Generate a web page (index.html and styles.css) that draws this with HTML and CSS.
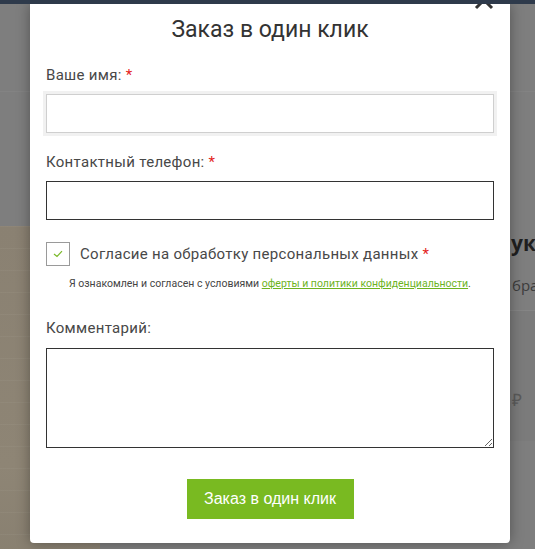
FILE: index.html
```html
<!DOCTYPE html>
<html lang="ru">
<head>
<meta charset="utf-8">
<title>Заказ в один клик</title>
<link rel="stylesheet" href="styles.css">
</head>
<body>
<div class="backdrop">
  <div class="bg-line-top"></div>
  <div class="bg-band"></div>
  <div class="chair"></div>
  <div class="bg-title">ук</div>
  <div class="bg-sub">бра</div>
  <div class="bg-price">₽</div>
</div>
<div class="topbar"></div>
<div class="modal">
  <button class="close" type="button" aria-label="Закрыть">
    <svg width="20" height="20" viewBox="0 0 20 20"><path d="M2 2 L18 18 M18 2 L2 18" stroke="#333" stroke-width="3" fill="none"/></svg>
  </button>
  <h1 class="title">Заказ в один клик</h1>
  <form class="form">
    <label class="label">Ваше имя: <span class="req">*</span></label>
    <input class="field field-focus" type="text">
    <label class="label">Контактный телефон: <span class="req">*</span></label>
    <input class="field" type="text">
    <div class="agree">
      <span class="check">
        <svg width="10" height="8" viewBox="0 0 10 8"><path d="M1 4 L4 6.5 L9 1.2" stroke="#7ab929" stroke-width="1.2" fill="none"/></svg>
      </span>
      <span class="agree-text">Согласие на обработку персональных данных <span class="req">*</span></span>
    </div>
    <p class="note">Я ознакомлен и согласен с условиями <a href="#">оферты и политики конфиденциальности</a>.</p>
    <label class="label label-comment">Комментарий:</label>
    <textarea class="area"></textarea>
    <div class="actions">
      <button class="submit" type="button">Заказ в один клик</button>
    </div>
  </form>
</div>
</body>
</html>
```
FILE: styles.css
```css
html, body {
  margin: 0;
  padding: 0;
}
body {
  width: 535px;
  height: 549px;
  overflow: hidden;
  background: #7e7e7e;
  font-family: Roboto, "Noto Sans", sans-serif;
  position: relative;
}
.backdrop {
  position: absolute;
  inset: 0;
  overflow: hidden;
}
.bg-line-top {
  position: absolute;
  left: 0;
  right: 0;
  top: 91px;
  height: 1px;
  background: #838383;
}
.bg-band {
  position: absolute;
  left: 0;
  right: 0;
  top: 310px;
  height: 130px;
  background: #7b7b7b;
  border-top: 1px solid #858585;
}
.chair {
  position: absolute;
  left: -40px;
  top: 226px;
  width: 140px;
  height: 400px;
  border-radius: 40px 40px 0 0;
  background:
    repeating-linear-gradient(180deg, rgba(255,255,255,0.04) 0 1px, transparent 1px 22px),
    linear-gradient(180deg, #8a8172, #8e8575 60%, #847c6d);
}
.bg-title {
  position: absolute;
  left: 511px;
  top: 229px;
  font-family: "Open Sans", sans-serif;
  font-weight: 700;
  font-size: 21px;
  line-height: 28px;
  color: #1f1f1f;
}
.bg-sub {
  position: absolute;
  left: 512px;
  top: 275px;
  font-family: "Open Sans", sans-serif;
  font-size: 15px;
  line-height: 20px;
  color: #3c3c3c;
}
.bg-price {
  position: absolute;
  left: 512px;
  top: 389px;
  font-family: "Open Sans", sans-serif;
  font-size: 17px;
  line-height: 22px;
  color: #5a5a5a;
}
.topbar {
  position: absolute;
  left: 0;
  top: 0;
  width: 100%;
  height: 4px;
  background: #2e3a4b;
  z-index: 3;
}
.modal {
  position: relative;
  z-index: 2;
  box-sizing: border-box;
  margin: 4px 0 0 30px;
  width: 480px;
  height: 539px;
  background: #fff;
  border-radius: 0 0 4px 4px;
  box-shadow: 0 0 14px rgba(0,0,0,0.35);
  padding: 12px 16px 0;
}
.close {
  position: absolute;
  right: 16px;
  top: -14px;
  width: 20px;
  height: 20px;
  padding: 0;
  border: 0;
  background: none;
}
.close svg {
  display: block;
}
.title {
  margin: 0;
  font-size: 23px;
  line-height: 28px;
  font-weight: 400;
  color: #333;
  text-align: center;
}
.form {
  display: flex;
  flex-direction: column;
  margin-top: 21px;
}
.label {
  display: block;
  font-size: 15px;
  line-height: 20px;
  letter-spacing: 0.3px;
  color: #484848;
  margin-bottom: 9px;
}
.req {
  color: #e41d1d;
}
.field {
  box-sizing: border-box;
  display: block;
  width: 448px;
  height: 39px;
  margin: 0 0 18px;
  border: 1px solid #333;
  border-radius: 0;
  background: #fff;
  padding: 0 10px;
  font: inherit;
  outline: none;
}
.field-focus {
  border-color: #cfcfcf;
  box-shadow: 0 0 0 3px #f1f1f1;
  margin-bottom: 19px;
}
.agree {
  display: flex;
  align-items: center;
  gap: 10px;
  margin-top: 4px;
}
.check {
  box-sizing: border-box;
  width: 24px;
  height: 24px;
  border: 1px solid #9a9a9a;
  display: flex;
  align-items: center;
  justify-content: center;
}
.check svg {
  display: block;
}
.agree-text {
  font-size: 15px;
  line-height: 20px;
  letter-spacing: 0.3px;
  color: #484848;
}
.note {
  margin: 11px 0 0 23px;
  font-size: 10.5px;
  line-height: 14px;
  color: #444;
}
.note a {
  color: #6db31e;
  text-decoration: underline;
}
.label-comment {
  margin-top: 27px;
  margin-bottom: 10px;
}
.area {
  box-sizing: border-box;
  display: block;
  width: 448px;
  height: 100px;
  border: 1px solid #333;
  border-radius: 0;
  margin: 0;
  font: inherit;
  outline: none;
  resize: both;
}
.actions {
  display: flex;
  justify-content: center;
  margin-top: 31px;
}
.submit {
  width: 167px;
  height: 40px;
  border: 0;
  border-radius: 0;
  background: #79ba21;
  color: #fff;
  font-family: "Liberation Sans", Arial, sans-serif;
  font-size: 16px;
  padding: 0;
}
```
